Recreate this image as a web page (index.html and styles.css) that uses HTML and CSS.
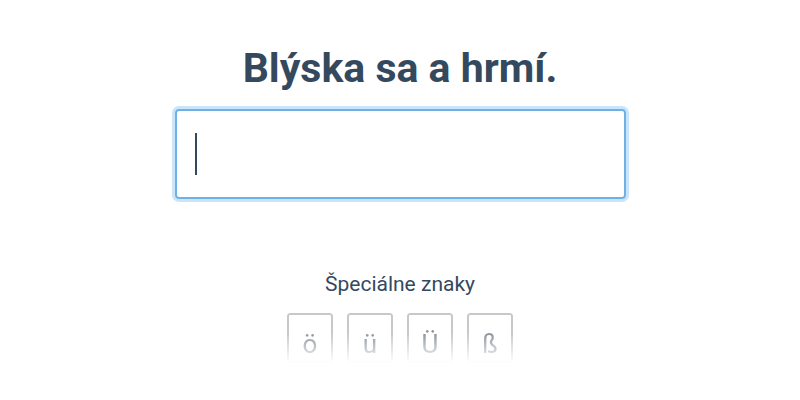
FILE: index.html
```html
<!DOCTYPE html>
<html lang="sk">

<head>
  <meta charset="UTF-8">
  <meta name="viewport" content="width=device-width, initial-scale=1.0">
  <title>Blýska sa a hrmí.</title>
  <link rel="stylesheet" href="styles.css">
</head>

<body>
  <div class="app">
    <h1 class="prompt">Blýska sa a hrmí.</h1>

    <!-- Pole na písanie -->
    <div class="answer">
      <span class="caret"></span>
    </div>

    <!-- Špeciálne znaky -->
    <div class="special">
      <div class="special-title">Špeciálne znaky</div>
      <div class="keys">
        <button class="key">ö</button>
        <button class="key">ü</button>
        <button class="key">Ü</button>
        <button class="key">ß</button>
      </div>
    </div>
  </div>
</body>

</html>
```

FILE: styles.css
```css
body {
  margin: 0;
  background-color: #fff;
  font-family: Roboto, "Liberation Sans", sans-serif;
  color: #34495e;
}

.app {
  display: flex;
  flex-direction: column;
  align-items: center;
  padding-top: 40px;
}

.prompt {
  margin: 0;
  font-size: 41px;
  font-weight: 700;
  line-height: 56px;
  color: #34495e;
}

.answer {
  box-sizing: border-box;
  width: 451px;
  height: 90px;
  margin-top: 13px;
  padding: 22px 18px;
  border: 2px solid #6cb2e8;
  border-radius: 4px;
  box-shadow: 0 0 0 3px rgba(108, 178, 232, 0.35);
  display: flex;
  align-items: center;
}

.caret {
  width: 2px;
  height: 42px;
  background-color: #34495e;
}

.special {
  margin-top: 71px;
  display: flex;
  flex-direction: column;
  align-items: center;
}

.special-title {
  font-size: 21px;
  line-height: 28px;
  color: #34495e;
}

.keys {
  display: flex;
  gap: 14px;
  margin-top: 15px;
}

.key {
  width: 46px;
  height: 50px;
  padding: 12px 0 0;
  border: 2px solid #c8c8c8;
  border-radius: 3px;
  background-color: #fff;
  font-family: Roboto, "Liberation Sans", sans-serif;
  font-size: 26px;
  color: #8a949c;
  -webkit-mask-image: linear-gradient(to bottom, #000 40%, transparent 100%);
  mask-image: linear-gradient(to bottom, #000 40%, transparent 100%);
}
```
